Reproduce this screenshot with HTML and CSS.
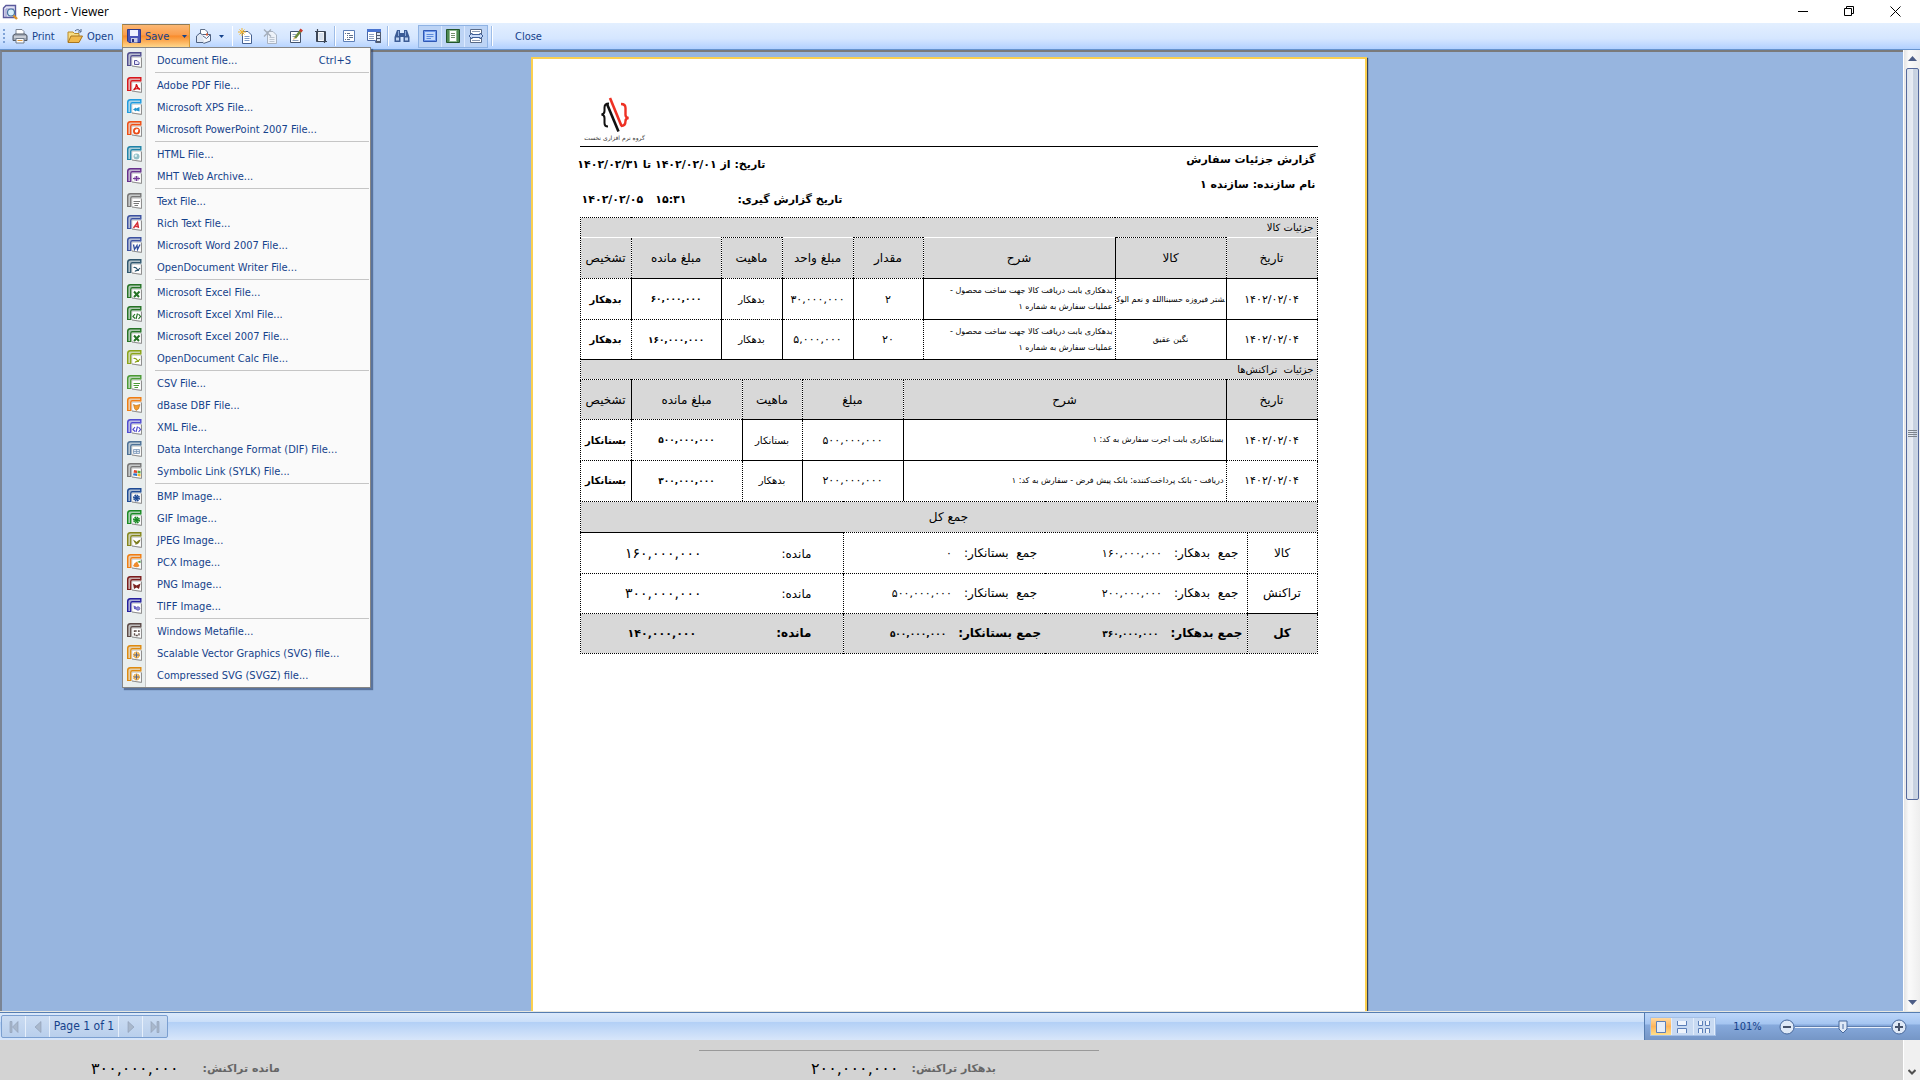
FILE: index.html
```html
<!DOCTYPE html>
<html lang="en">
<head>
  <meta charset="UTF-8" />
  <meta name="viewport" content="width=device-width, initial-scale=1" />
  <title>Report - Viewer</title>
  <link rel="stylesheet" href="styles.css">
</head>
<body>

  <!-- Shared icon shapes -->
  <svg class="defs" aria-hidden="true">
    <symbol id="file" viewBox="0 0 16 16">
      <path d="M0 14V3Q0 0 3 0H14V5H6Q5 5 5 6V14Z" fill="currentColor" opacity=".3"/>
      <path d="M.7 13.500V3.500Q.7 .7 3.500 .7H13.800V4.500" fill="none" stroke="currentColor" stroke-width="1.400"/>
      <path d="M3.700 14V5.500Q3.700 3.700 5.500 3.700H13" fill="none" stroke="currentColor" stroke-width="1.200"/>
      <path d="M0 13.500H4" stroke="currentColor"/>
      <path d="M5 5.500H14L14.500 15.500L5 14Z" fill="#fff" stroke="#c4c4c4" stroke-width=".6"/>
      <path d="M14.500 5.500V15.400L5 14" fill="none" stroke="#8f8f8f"/>
    </symbol>
    <symbol id="lines" viewBox="0 0 16 16">
      <path d="M6.500 8.500H13M6.500 10.500H12M7.500 12.500H11" stroke="currentColor" fill="none"/>
    </symbol>
    <symbol id="cross" viewBox="0 0 16 16">
      <path d="M7 7.500L12 13M12.500 7.500L7 13" stroke="currentColor" stroke-width="2" fill="none"/>
    </symbol>
    <symbol id="code" viewBox="0 0 16 16">
      <path d="M8 8L6 10.500L8 12.500M11.500 8L13.500 10.500L11.500 13M10.500 7.500L9 13" stroke="currentColor" stroke-width="1.200" fill="none"/>
    </symbol>
    <symbol id="wave" viewBox="0 0 16 16">
      <path d="M6.500 8.500Q9 8 10 10T13 9M8 12.500Q9 11 12 11.500" stroke="currentColor" stroke-width="1.200" fill="none"/>
    </symbol>
    <symbol id="flower" viewBox="0 0 16 16">
      <circle cx="9.500" cy="10" r="2.600" fill="none" stroke="currentColor" stroke-width="1.800" stroke-dasharray="1.500 .5"/>
      <circle cx="9.500" cy="10" r="2" fill="currentColor"/>
    </symbol>
    <symbol id="wheel" viewBox="0 0 16 16">
      <circle cx="9.500" cy="10" r="3" fill="#f6c66d" stroke="#d98a16" stroke-dasharray="1.500 .7"/>
      <path d="M9.500 7.500V12.500M7 10H12" stroke="#56618a"/>
    </symbol>
  </svg>

  <div class="title-bar">
    <svg class="app-icon" viewBox="0 0 16 16" width="16" height="16" aria-hidden="true">
      <path d="M1.500 13.500V4L4 1.500H13.500V13.500Z" fill="#e4e4f6" stroke="#5b5a9c" stroke-width="1.400"/>
      <path d="M4 13V5H12" fill="none" stroke="#8e8dc2"/>
      <circle cx="9" cy="8.500" r="3.500" fill="#d9f0fb" stroke="#47749f" stroke-width="1.200"/>
      <path d="M11.500 11.500L15 15" stroke="#dd9428" stroke-width="2.400"/>
    </svg>
    <span class="title">Report - Viewer</span>
    <div class="window-buttons">
      <button type="button" aria-label="Minimize"><svg viewBox="0 0 11 11" width="11" height="11"><path d="M0 5.500H10" stroke="#000"/></svg></button>
      <button type="button" aria-label="Restore"><svg viewBox="0 0 11 11" width="11" height="11"><path d="M.5 2.500H7.500V9.500H.5ZM2.500 2.500V.5H9.500V7.500H7.500" fill="none" stroke="#000"/></svg></button>
      <button type="button" aria-label="Close window"><svg viewBox="0 0 11 11" width="11" height="11"><path d="M.5 .5L10.500 10.500M10.500 .5L.5 10.500" stroke="#000"/></svg></button>
    </div>
  </div>

  <div class="toolbar">
    <div class="grip"><i></i><i></i><i></i><i></i></div>
    <button type="button" class="tool print">
      <svg viewBox="0 0 16 16" width="16" height="16" aria-hidden="true">
        <path d="M4 7V1.500H10L12 3.500V7" fill="#fff" stroke="#7c8797"/>
        <path d="M1 7.500L3 6H13L15 7.500V12.500H1Z" fill="#a3aab6" stroke="#4f5763"/>
        <path d="M2 9H14" stroke="#eef1f5"/>
        <path d="M4 10.500H12V15H4Z" fill="#fff" stroke="#6f7b8b"/>
        <path d="M5.500 12.500H10.500" stroke="#e39a3b"/>
      </svg>
      Print
    </button>
    <button type="button" class="tool open">
      <svg viewBox="0 0 16 16" width="16" height="16" aria-hidden="true">
        <path d="M1 14V4H6L7.500 5.500H12V8" fill="#f8dd83" stroke="#b98a2b"/>
        <path d="M1 14.500L4 8H15.500L12 14.500Z" fill="#f0b94c" stroke="#a87620"/>
        <path d="M8 3Q11 0 13.500 3.500M14 1V4H11" fill="none" stroke="#4d6287"/>
      </svg>
      Open
    </button>

    <div class="save-wrap">
      <button type="button" class="tool save" aria-haspopup="menu" aria-expanded="true">
        <svg viewBox="0 0 14 14" width="14" height="14" aria-hidden="true">
          <path d="M.5 .5H13.500V13.500H2L.5 12Z" fill="#4a55b8" stroke="#2f3785"/>
          <path d="M3 1H11V7H3Z" fill="#eef2ff"/>
          <path d="M4 9H10.500V13.500H4Z" fill="#c9cee6"/>
          <path d="M5 10H7V13H5Z" fill="#29307c"/>
        </svg>
        Save
        <svg class="arrow" viewBox="0 0 5 3" width="5" height="3" aria-hidden="true"><path d="M0 0H5L2.500 3Z" fill="#15428b"/></svg>
      </button>

      <ul class="menu" role="menu">
        <li><button type="button" role="menuitem"><svg class="c-violet" viewBox="0 0 16 16"><use href="#file"/><path d="M7.500 12.500V8.500H10L12 10.500V12.500Z" fill="#e8e7fa" stroke="#56529c"/></svg><span>Document File...</span><kbd>Ctrl+S</kbd></button></li>
        <li class="divider"></li>
        <li><button type="button" role="menuitem"><svg class="c-red" viewBox="0 0 16 16"><use href="#file"/><path d="M6.500 13Q9.500 11 9.500 7Q10 11 13 12.500Q10 10.500 6.500 13" fill="none" stroke="#d31519" stroke-width="1.400"/></svg><span>Adobe PDF File...</span></button></li>
        <li><button type="button" role="menuitem"><svg class="c-sky" viewBox="0 0 16 16"><use href="#file"/><path d="M6 10.500L9 8.500V9.500L12.500 8V12.500L9 11.500V12.500Z" fill="#2696cf"/></svg><span>Microsoft XPS File...</span></button></li>
        <li><button type="button" role="menuitem"><svg class="c-orange" viewBox="0 0 16 16"><use href="#file"/><circle cx="9.500" cy="10" r="2.600" fill="none" stroke="#ea4c17" stroke-width="1.800"/><path d="M9.500 10V7.500L12 9Z" fill="#fff"/></svg><span>Microsoft PowerPoint 2007 File...</span></button></li>
        <li class="divider"></li>
        <li><button type="button" role="menuitem"><svg class="c-teal" viewBox="0 0 16 16"><use href="#file"/><circle cx="9.500" cy="10.500" r="3" fill="#94c0c8"/><circle cx="8.800" cy="9.800" r="1.200" fill="#e3f2f4"/></svg><span>HTML File...</span></button></li>
        <li><button type="button" role="menuitem"><svg class="c-purple" viewBox="0 0 16 16"><use href="#file"/><ellipse cx="9.500" cy="10.500" rx="3" ry="2.500" fill="#b79fca"/><path d="M6 10.500H13M9.500 8V13" stroke="#73389a"/></svg><span>MHT Web Archive...</span></button></li>
        <li class="divider"></li>
        <li><button type="button" role="menuitem"><svg class="c-gray" viewBox="0 0 16 16"><use href="#file"/><use href="#lines"/></svg><span>Text File...</span></button></li>
        <li><button type="button" role="menuitem"><svg class="c-blue" viewBox="0 0 16 16"><use href="#file"/><path d="M6.500 13L10.500 7.500L11.500 13M8.500 11.500H11.500" fill="none" stroke="#d42f38" stroke-width="1.500"/></svg><span>Rich Text File...</span></button></li>
        <li><button type="button" role="menuitem"><svg class="c-blue" viewBox="0 0 16 16"><use href="#file"/><path d="M6.500 7.500L7.500 12.500L10 8.500L10.500 12.500L13 7.500" fill="none" stroke="#2f4d9d" stroke-width="1.300"/></svg><span>Microsoft Word 2007 File...</span></button></li>
        <li><button type="button" role="menuitem"><svg class="c-slate" viewBox="0 0 16 16"><use href="#file"/><use href="#wave"/></svg><span>OpenDocument Writer File...</span></button></li>
        <li class="divider"></li>
        <li><button type="button" role="menuitem"><svg class="c-green" viewBox="0 0 16 16"><use href="#file"/><use href="#cross"/></svg><span>Microsoft Excel File...</span></button></li>
        <li><button type="button" role="menuitem"><svg class="c-green" viewBox="0 0 16 16"><use href="#file"/><use href="#code"/></svg><span>Microsoft Excel Xml File...</span></button></li>
        <li><button type="button" role="menuitem"><svg class="c-green" viewBox="0 0 16 16"><use href="#file"/><use href="#cross"/></svg><span>Microsoft Excel 2007 File...</span></button></li>
        <li><button type="button" role="menuitem"><svg class="c-lime" viewBox="0 0 16 16"><use href="#file"/><use href="#wave"/></svg><span>OpenDocument Calc File...</span></button></li>
        <li class="divider"></li>
        <li><button type="button" role="menuitem"><svg class="c-leaf" viewBox="0 0 16 16"><use href="#file"/><use href="#lines"/></svg><span>CSV File...</span></button></li>
        <li><button type="button" role="menuitem"><svg class="c-amber" viewBox="0 0 16 16"><use href="#file"/><path d="M6.500 7.500L9 8.500L13 7.500L11.500 12L9 13.500L7.500 11.500Z" fill="#f39a2c" stroke="#b9690f" stroke-width=".6"/></svg><span>dBase DBF File...</span></button></li>
        <li><button type="button" role="menuitem"><svg class="c-indigo" viewBox="0 0 16 16"><use href="#file"/><use href="#code"/></svg><span>XML File...</span></button></li>
        <li><button type="button" role="menuitem"><svg class="c-steel" viewBox="0 0 16 16"><use href="#file"/><path d="M6.500 8.500H12.500V12.500H6.500ZM6.500 10.500H12.500M9.500 8.500V12.500" fill="#dfe8f2" stroke="#7c98b8" stroke-width=".8"/></svg><span>Data Interchange Format (DIF) File...</span></button></li>
        <li><button type="button" role="menuitem"><svg class="c-gray" viewBox="0 0 16 16"><use href="#file"/><path d="M7 7L10 7.500V10L6.500 9.800Z" fill="#e0482e"/><path d="M10.500 7.500L13.500 8V10.500L10.500 10.200Z" fill="#55a838"/><path d="M6.500 10.200L10 10.500V13L6 12.200Z" fill="#2c70c9"/><path d="M10.500 10.700L13.500 11V13.500L10.500 13Z" fill="#f1b92a"/></svg><span>Symbolic Link (SYLK) File...</span></button></li>
        <li class="divider"></li>
        <li><button type="button" role="menuitem"><svg class="c-navy" viewBox="0 0 16 16"><use href="#file"/><use href="#flower"/></svg><span>BMP Image...</span></button></li>
        <li><button type="button" role="menuitem"><svg class="c-grass" viewBox="0 0 16 16"><use href="#file"/><use href="#flower"/></svg><span>GIF Image...</span></button></li>
        <li><button type="button" role="menuitem"><svg class="c-olive" viewBox="0 0 16 16"><use href="#file"/><path d="M6 7.500Q9 9 9.500 10Q11 8 13.500 7.500Q12 13 8 12.500L8.500 11.500Q7 10.500 6 7.500" fill="#7c7d1f"/></svg><span>JPEG Image...</span></button></li>
        <li><button type="button" role="menuitem"><svg class="c-amber" viewBox="0 0 16 16"><use href="#file"/><path d="M6 12Q7 8.500 10 7.500L12.500 12Q9.500 14.500 6 12" fill="#ef8c2c"/><path d="M10 8L13.500 6.500V9Z" fill="#3f9a3b"/></svg><span>PCX Image...</span></button></li>
        <li><button type="button" role="menuitem"><svg class="c-maroon" viewBox="0 0 16 16"><use href="#file"/><path d="M6 7.500L9.500 9.500L13.500 7.500L12 13L9.500 11.500L7 13Z" fill="#7c2320"/></svg><span>PNG Image...</span></button></li>
        <li><button type="button" role="menuitem"><svg class="c-royal" viewBox="0 0 16 16"><use href="#file"/><path d="M6.500 7.500L9 8.500V11.500L7 11Z" fill="#6a63c4"/><circle cx="11" cy="10.500" r="1.800" fill="#8f8ad6" stroke="#5650b0" stroke-width=".7"/></svg><span>TIFF Image...</span></button></li>
        <li class="divider"></li>
        <li><button type="button" role="menuitem"><svg class="c-brown" viewBox="0 0 16 16"><use href="#file"/><path d="M7.500 8H12V12.500H7.500Z" fill="none" stroke="#5c4b48" stroke-width="1.400" stroke-dasharray="2.200 1.200"/></svg><span>Windows Metafile...</span></button></li>
        <li><button type="button" role="menuitem"><svg class="c-gold" viewBox="0 0 16 16"><use href="#file"/><use href="#wheel"/></svg><span>Scalable Vector Graphics (SVG) file...</span></button></li>
        <li><button type="button" role="menuitem"><svg class="c-gold" viewBox="0 0 16 16"><use href="#file"/><use href="#wheel"/></svg><span>Compressed SVG (SVGZ) file...</span></button></li>
      </ul>
    </div>

    <button type="button" class="tool mail" aria-label="Send e-mail">
      <svg viewBox="0 0 16 16" width="16" height="16" aria-hidden="true">
        <path d="M4.500 1.500H9L11.500 4V10H4.500Z" fill="#fff" stroke="#5f6f87"/>
        <path d="M.5 8L4 5L8 8V14.500H.5Z" fill="#dfe7f3" stroke="#4f6180"/>
        <path d="M6.500 6.500H14.500V13L7.500 15.500" fill="#f4f7fc" stroke="#4f6180"/>
        <path d="M7 8L10.500 10.500L14 7" fill="none" stroke="#5f7190"/>
        <path d="M10 5.500H12V7.500H10Z" fill="#db5a32"/>
      </svg>
      <svg class="arrow" viewBox="0 0 5 3" width="5" height="3" aria-hidden="true"><path d="M0 0H5L2.500 3Z" fill="#15428b"/></svg>
    </button>
    <span class="sep first"></span>
    <button type="button" class="icon-btn" aria-label="New page">
      <svg viewBox="0 0 16 16" width="16" height="16" aria-hidden="true">
        <path d="M4.500 3.500H10L13.500 7V15.500H4.500Z" fill="#fff" stroke="#456091"/>
        <path d="M6.500 8.500H11.500M6.500 10.500H11.500M6.500 12.500H11.500" stroke="#7f9cc9"/>
        <path d="M4 0V8M0 4H8M1.500 1.500L6.500 6.500M6.500 1.500L1.500 6.500" stroke="#f1b32d"/>
      </svg>
    </button>
    <button type="button" class="icon-btn" aria-label="Delete page" disabled>
      <svg viewBox="0 0 16 16" width="16" height="16" aria-hidden="true">
        <path d="M4.500 3.500H10L13.500 7V15.500H4.500Z" fill="#edf2f9" stroke="#a9b3c2"/>
        <path d="M6.500 9.500H11.500M6.500 11.500H11.500M6.500 13.500H11.500" stroke="#bcc5d1"/>
        <path d="M1 1.500L8 8.500M8 1.500L1 8.500" stroke="#a4adba" stroke-width="1.400"/>
      </svg>
    </button>
    <button type="button" class="icon-btn" aria-label="Edit page">
      <svg viewBox="0 0 16 16" width="16" height="16" aria-hidden="true">
        <path d="M2.500 3.500H12.500V14.500H2.500Z" fill="#fff" stroke="#44546e"/>
        <path d="M4.500 6.500H8M4.500 8.500H7M4.500 12.500H10.500" stroke="#8fa2bd"/>
        <path d="M7 10L13 2.500" stroke="#6c8a3c" stroke-width="2.600"/>
        <path d="M12.200 3.500L13.800 1.500" stroke="#c93a2c" stroke-width="3"/>
        <path d="M5 12L6 9L8 10.500Z" fill="#e2bc7d"/>
      </svg>
    </button>
    <button type="button" class="icon-btn" aria-label="Page setup">
      <svg viewBox="0 0 16 16" width="16" height="16" aria-hidden="true">
        <path d="M3.500 3.500H12.500V13.500H3.500Z" fill="#fff" stroke="#3d4757"/>
        <path d="M4.500 1V14M11.500 3V15M2 3.500H12M4 13.500H14" stroke="#3d4757" stroke-width="1.200"/>
        <path d="M6 5H10V12H6Z" fill="#d8e2ef"/>
      </svg>
    </button>
    <span class="sep"></span>
    <button type="button" class="icon-btn" aria-label="Bookmarks">
      <svg viewBox="0 0 16 16" width="16" height="16" aria-hidden="true">
        <path d="M2.500 2.500H13.500V13.500H2.500Z" fill="#fff" stroke="#5d7fb8"/>
        <path d="M4 5.500H5M6 5.500H9M6 7.500H7M8 7.500H12M6 9.500H7M8 9.500H12M4 11.500H5M6 11.500H9" stroke="#60718d"/>
      </svg>
    </button>
    <button type="button" class="icon-btn" aria-label="Thumbnails">
      <svg viewBox="0 0 16 16" width="16" height="16" aria-hidden="true">
        <path d="M1.500 1.500H14.500V14.500H9.500V12.500H1.500Z" fill="#fff" stroke="#4a67a4"/>
        <path d="M1 2.500H15" stroke="#4a74d0" stroke-width="3"/>
        <path d="M3 6.500H8M3 8.500H8M3 10.500H8" stroke="#8fa2c0"/>
        <path d="M10 4H15V15H10Z" fill="#505b70"/>
        <path d="M11 5H14V7H11ZM11 8H14V10H11ZM11 11H14V13H11Z" fill="#dfe8f5"/>
      </svg>
    </button>
    <span class="sep"></span>
    <button type="button" class="icon-btn" aria-label="Find">
      <svg viewBox="0 0 16 16" width="16" height="16" aria-hidden="true">
        <path d="M3 2H6V5H10V2H13L15.500 9V14H9.500V9H6.500V14H.5V9Z" fill="#3c5c96"/>
        <path d="M2 9.500H5V12.500H2ZM11 9.500H14V12.500H11Z" fill="#bcd0ee"/>
        <path d="M4.500 3V8M11.500 3V8" stroke="#8eabdb"/>
      </svg>
    </button>
    <div class="btn-group">
      <button type="button" aria-label="Full screen">
        <svg viewBox="0 0 16 16" width="16" height="16" aria-hidden="true">
          <path d="M1.500 2.500H14.500V13.500H1.500Z" fill="#6d97ea" stroke="#2f57b4"/>
          <path d="M3 4H13V12H3Z" fill="#c3d9fc"/>
          <path d="M4.500 6.500H11.500M4.500 8.500H11.500M4.500 10.500H9" stroke="#5d8adb"/>
        </svg>
      </button>
      <button type="button" aria-label="Whole page">
        <svg viewBox="0 0 16 16" width="16" height="16" aria-hidden="true">
          <path d="M1.500 1.500H14.500V14.500H1.500Z" fill="#4f8a52" stroke="#22542b"/>
          <path d="M4.500 2.500H11.500V13.500H4.500Z" fill="#fff" stroke="#8fb88f"/>
          <path d="M6 5.500H10M6 7.500H10M6 9.500H10" stroke="#76906f"/>
        </svg>
      </button>
      <button type="button" aria-label="Page width">
        <svg viewBox="0 0 16 16" width="16" height="16" aria-hidden="true">
          <path d="M2.500 1.500H13.500V14.500H2.500Z" fill="#fff" stroke="#596a86"/>
          <path d="M4 3.500H12M4 12.500H12" stroke="#8b9ab3"/>
          <path d="M1 8L4 5V6.500H12V5L15 8L12 11V9.500H4V11Z" fill="#c8daf8" stroke="#3f5f97"/>
        </svg>
      </button>
    </div>
    <span class="sep"></span>
    <button type="button" class="tool close">Close</button>
  </div>

  <!-- Preview area -->
  <main class="viewer">
    <div class="canvas">
      <article class="paper" lang="fa" dir="rtl">
        <div class="logo">
          <svg viewBox="0 0 30 36" width="30" height="36" aria-hidden="true">
            <path d="M9 6.500Q4.500 6.500 4.500 10.500V14Q4.500 17 1.500 17.500Q4.500 18 4.500 21V26Q4.500 29.500 8 29.500" fill="none" stroke="#111" stroke-width="2"/>
            <path d="M7 7L18.500 34.500" stroke="#111" stroke-width="2.600"/>
            <path d="M10 1L21.500 29" stroke="#ee3124" stroke-width="2.600"/>
            <path d="M21 7Q25.500 7 25.500 11V18Q25.500 20.500 28.500 21Q25.500 21.500 25.500 24Q25.500 29 21 29" fill="none" stroke="#ee3124" stroke-width="2.400"/>
          </svg>
          <span>گروه نرم افزاری نخست</span>
        </div>

        <header class="report-head">
          <div class="head-right">
            <h1>گزارش جزئیات سفارش</h1>
            <p>نام سازنده: سازنده ۱</p>
          </div>
          <div class="head-left">
            <p class="range">تاریخ: از ۱۴۰۲/۰۲/۰۱ تا ۱۴۰۲/۰۲/۳۱</p>
            <p class="taken"><span>تاریخ گزارش گیری:</span><span>۱۵:۳۱</span><span>۱۴۰۲/۰۲/۰۵</span></p>
          </div>
        </header>

        <table class="report goods">
          <colgroup><col class="w91"><col class="w111"><col><col class="w70"><col class="w71"><col class="w61"><col class="w90"><col class="w51"></colgroup>
          <thead>
            <tr class="group"><th colspan="8">جزئیات کالا</th></tr>
            <tr class="cols">
              <th class="no-top">تاریخ</th><th class="sl">کالا</th><th class="no-top">شرح</th><th>مقدار</th>
              <th class="no-top">مبلغ واحد</th><th>ماهیت</th><th class="no-top">مبلغ مانده</th><th class="no-top">تشخیص</th>
            </tr>
          </thead>
          <tbody>
            <tr>
              <td class="st sl sb">۱۴۰۲/۰۲/۰۴</td>
              <td class="st sb name">&zwj;شتر فیروزه حسبناالله و نعم الوک&zwj;</td>
              <td class="st sl sb desc">بدهکاری بابت دریافت کالا جهت ساخت محصول - عملیات سفارش به شماره ۱</td>
              <td class="sl">۲</td><td class="sl">۳۰,۰۰۰,۰۰۰</td><td class="sl word">بدهکار</td>
              <td class="st sl strong">۶۰,۰۰۰,۰۰۰</td><td class="strong word">بدهکار</td>
            </tr>
            <tr class="last">
              <td class="sl">۱۴۰۲/۰۲/۰۴</td>
              <td class="name">نگین عقیق</td>
              <td class="desc">بدهکاری بابت دریافت کالا جهت ساخت محصول - عملیات سفارش به شماره ۱</td>
              <td class="sl">۲۰</td><td class="sl">۵,۰۰۰,۰۰۰</td><td class="sl word">بدهکار</td>
              <td class="strong">۱۶۰,۰۰۰,۰۰۰</td><td class="strong word">بدهکار</td>
            </tr>
          </tbody>
        </table>

        <table class="report deals">
          <colgroup><col class="w91"><col><col class="w101"><col class="w60"><col class="w111"><col class="w51"></colgroup>
          <thead>
            <tr class="group"><th colspan="6">جزئیات &nbsp;تراکنش‌ها</th></tr>
            <tr class="cols">
              <th class="sl sb">تاریخ</th><th class="sb">شرح</th><th>مبلغ</th><th>ماهیت</th><th class="sl">مبلغ مانده</th><th>تشخیص</th>
            </tr>
          </thead>
          <tbody>
            <tr>
              <td class="st sl">۱۴۰۲/۰۲/۰۴</td>
              <td class="st sl sb desc">بستانکاری بابت اجرت سفارش به کد: ۱</td>
              <td class="st sb">۵۰۰,۰۰۰,۰۰۰</td><td class="st sl sb word">بستانکار</td>
              <td class="strong">۵۰۰,۰۰۰,۰۰۰</td><td class="strong word">بستانکار</td>
            </tr>
            <tr class="open-end">
              <td>۱۴۰۲/۰۲/۰۴</td>
              <td class="sl desc">دریافت - بانک پرداخت‌کننده: بانک پیش فرض - سفارش به کد: ۱</td>
              <td class="sl">۲۰۰,۰۰۰,۰۰۰</td><td class="word">بدهکار</td>
              <td class="sl strong">۳۰۰,۰۰۰,۰۰۰</td><td class="strong word">بستانکار</td>
            </tr>
          </tbody>
        </table>

        <table class="report totals">
          <colgroup><col class="w70"><col><col class="w202"><col class="w263"></colgroup>
          <thead>
            <tr class="grand"><th colspan="4">جمع کل</th></tr>
          </thead>
          <tbody>
            <tr>
              <th scope="row">کالا</th>
              <td class="sum"><b>جمع &nbsp;بدهکار:</b><span>۱۶۰,۰۰۰,۰۰۰</span></td>
              <td class="sum inner"><b>جمع &nbsp;بستانکار:</b><span>۰</span></td>
              <td class="rest st"><b>مانده:</b><span>۱۶۰,۰۰۰,۰۰۰</span></td>
            </tr>
            <tr>
              <th scope="row">تراکنش</th>
              <td class="sum"><b>جمع &nbsp;بدهکار:</b><span>۲۰۰,۰۰۰,۰۰۰</span></td>
              <td class="sum inner"><b>جمع &nbsp;بستانکار:</b><span>۵۰۰,۰۰۰,۰۰۰</span></td>
              <td class="rest"><b>مانده:</b><span>۳۰۰,۰۰۰,۰۰۰</span></td>
            </tr>
            <tr class="all">
              <th scope="row" class="st">کل</th>
              <td class="sum"><b>جمع بدهکار:</b><span>۳۶۰,۰۰۰,۰۰۰</span></td>
              <td class="sum inner"><b>جمع بستانکار:</b><span>۵۰۰,۰۰۰,۰۰۰</span></td>
              <td class="rest"><b>مانده:</b><span>۱۴۰,۰۰۰,۰۰۰</span></td>
            </tr>
          </tbody>
        </table>
      </article>
    </div>

    <div class="scrollbar">
      <button type="button" aria-label="Scroll up"><svg viewBox="0 0 9 5" width="9" height="5"><path d="M4.500 0L9 5H0Z" fill="#4b5c86"/></svg></button>
      <div class="track"><div class="thumb"><i></i><i></i><i></i><i></i></div></div>
      <button type="button" aria-label="Scroll down"><svg viewBox="0 0 9 5" width="9" height="5"><path d="M0 0H9L4.500 5Z" fill="#4b5c86"/></svg></button>
    </div>
  </main>

  <div class="status-bar">
    <div class="pager">
      <button type="button" aria-label="First page" disabled><svg viewBox="0 0 10 12" width="10" height="12"><path d="M1 .5H3V11.500H1ZM9 .5V11.500L3.500 6Z" fill="#a9b8cc" stroke="#8d9cb3" stroke-width=".6"/></svg></button>
      <button type="button" aria-label="Previous page" disabled><svg viewBox="0 0 10 12" width="10" height="12"><path d="M8 .5V11.500L2 6Z" fill="#a9b8cc" stroke="#8d9cb3" stroke-width=".6"/></svg></button>
      <span class="page-no">Page 1 of 1</span>
      <button type="button" aria-label="Next page" disabled><svg viewBox="0 0 10 12" width="10" height="12"><path d="M2 .5V11.500L8 6Z" fill="#a9b8cc" stroke="#8d9cb3" stroke-width=".6"/></svg></button>
      <button type="button" aria-label="Last page" disabled><svg viewBox="0 0 10 12" width="10" height="12"><path d="M7 .5H9V11.500H7ZM1 .5V11.500L6.500 6Z" fill="#a9b8cc" stroke="#8d9cb3" stroke-width=".6"/></svg></button>
    </div>
    <div class="zoom-panel">
      <div class="views">
        <button type="button" class="on" aria-label="Single page"><svg viewBox="0 0 12 12" width="12" height="12"><path d="M1.500 .5H10.500V11.500H1.500Z" fill="#e6edf8" stroke="#5b7fb8"/></svg></button>
        <button type="button" aria-label="Continuous"><svg viewBox="0 0 12 12" width="12" height="12"><path d="M1.500 0V4.500H10.500V0M1.500 12V7.500H10.500V12" fill="#eef4fc" stroke="#5b7fb8"/></svg></button>
        <button type="button" aria-label="Multiple pages"><svg viewBox="0 0 12 12" width="12" height="12"><path d="M.5 0V4.500H4.500V0M7.500 0V4.500H11.500V0M.5 12V7.500H4.500V12M7.500 12V7.500H11.500V12" fill="#eef4fc" stroke="#5b7fb8"/></svg></button>
      </div>
      <label class="zoom-value" for="zoom">101%</label>
      <button type="button" class="round" aria-label="Zoom out"><svg viewBox="0 0 16 16" width="16" height="16"><circle cx="8" cy="8" r="7" fill="#dfe9f7" stroke="#47689c"/><path d="M4 8H12" stroke="#47536b" stroke-width="2"/></svg></button>
      <input type="range" id="zoom" min="0" max="200" value="101">
      <button type="button" class="round" aria-label="Zoom in"><svg viewBox="0 0 16 16" width="16" height="16"><circle cx="8" cy="8" r="7" fill="#dfe9f7" stroke="#47689c"/><path d="M4 8H12M8 4V12" stroke="#47536b" stroke-width="2"/></svg></button>
    </div>
  </div>

  <!-- Totals of the form behind the viewer -->
  <footer class="behind">
    <div class="behind-body">
      <p><span class="num">۳۰۰,۰۰۰,۰۰۰</span><span class="cap">مانده تراکنش:</span></p>
      <p class="ruled"><span class="num">۲۰۰,۰۰۰,۰۰۰</span><span class="cap">بدهکار تراکنش:</span></p>
    </div>
    <div class="behind-scroll">
      <svg viewBox="0 0 8 6" width="8" height="6" aria-hidden="true"><path d="M.5 1L4 4.500L7.500 1" fill="none" stroke="#505050" stroke-width="2"/></svg>
    </div>
  </footer>

</body>
</html>
```
FILE: styles.css
```css
* {
  box-sizing: border-box;
}

body {
  margin: 0;
  height: 100vh;
  display: flex;
  flex-direction: column;
  overflow: hidden;
  font-family: "DejaVu Sans Condensed", "Open Sans", sans-serif;
  font-size: 11px;
  color: #15428b;
  background: #fff;
}

button {
  font: inherit;
  color: inherit;
  background: none;
  border: 0;
  padding: 0;
  display: flex;
  align-items: center;
  justify-content: center;
}

p, h1, ul {
  margin: 0;
  padding: 0;
}

.defs {
  display: none;
}

/* Title bar */
.title-bar {
  height: 23px;
  flex: none;
  display: flex;
  align-items: center;
  padding-left: 2px;
  color: #000;
}

.title {
  font-family: "Open Sans", sans-serif;
  font-size: 12px;
  margin-left: 5px;
}

.window-buttons {
  margin-left: auto;
  margin-right: 2px;
  display: flex;
}

.window-buttons button {
  width: 46px;
  height: 20px;
}

/* Toolbar */
.toolbar {
  height: 27px;
  flex: none;
  display: flex;
  align-items: center;
  background: linear-gradient(#e3efff, #d5e6ff 60%, #b1d0ff);
  border-bottom: 1px solid #6593cf;
}

.grip {
  width: 9px;
  padding-left: 3px;
  display: flex;
  flex-direction: column;
  gap: 2px;
}

.grip i {
  width: 2px;
  height: 2px;
  background: #7fa3d8;
}

.tool {
  height: 24px;
  gap: 4px;
}

.print {
  width: 55px;
  padding-left: 3px;
  justify-content: flex-start;
}

.open {
  width: 58px;
  padding-left: 3px;
  justify-content: flex-start;
}

.save-wrap {
  position: relative;
}

.save {
  width: 68px;
  padding: 0 2px 0 4px;
  justify-content: flex-start;
  border: 1px solid #d69a35;
  border-top-color: #8f7a55;
  background: linear-gradient(#fbb875, #fa9d4c 45%, #f98b2b 50%, #ffd68a);
}

.save .arrow {
  margin-left: auto;
}

.mail {
  width: 42px;
  padding-left: 6px;
  gap: 7px;
  justify-content: flex-start;
}

.sep {
  width: 2px;
  height: 20px;
  margin-left: 1px;
  background: linear-gradient(to right, #9ebde8 50%, #fff 50%);
}

.sep.first {
  width: 1px;
  margin-left: 0;
}

.icon-btn {
  width: 25px;
  height: 24px;
}

.btn-group {
  display: flex;
  margin: 0 2px 0 4px;
  width: 70px;
  height: 23px;
  border: 1px solid #8fb3e4;
  background: #bdd4f5;
}

.btn-group button {
  flex: 1;
}

.btn-group button + button {
  border-left: 1px solid #dceaff;
}

.close {
  margin-left: 22px;
}

/* Save menu */
.menu {
  position: absolute;
  z-index: 5;
  top: 23px;
  left: 0;
  width: 249px;
  padding: 1px;
  list-style: none;
  border: 1px solid #868686;
  background: linear-gradient(to right, #e9eeee 22px, #c5c5c5 22px, #c5c5c5 23px, #fafafa 23px);
  box-shadow: 2px 2px 1px rgba(40, 60, 100, 0.55);
}

.menu button {
  width: 100%;
  height: 22px;
  padding: 0 18px 0 3px;
  justify-content: flex-start;
}

.menu svg {
  width: 16px;
  height: 16px;
  margin-right: 14px;
}

.menu kbd {
  font: inherit;
  margin-left: auto;
}

.menu .divider {
  height: 3px;
  margin-left: 31px;
  border-top: 1px solid #fafafa;
  border-bottom: 1px solid #fafafa;
  background: #c5c5c5;
}

.c-violet { color: #514e8e; }
.c-red { color: #d8171b; }
.c-sky { color: #1f9ade; }
.c-orange { color: #ee4e14; }
.c-teal { color: #1f83a8; }
.c-purple { color: #66308c; }
.c-gray { color: #777; }
.c-blue { color: #3c52a0; }
.c-slate { color: #2f566e; }
.c-green { color: #267326; }
.c-lime { color: #8aa318; }
.c-leaf { color: #4b9a35; }
.c-amber { color: #f07d12; }
.c-indigo { color: #504bd0; }
.c-steel { color: #4c7096; }
.c-navy { color: #1e4a94; }
.c-grass { color: #188a22; }
.c-olive { color: #85861c; }
.c-maroon { color: #7b1d1c; }
.c-royal { color: #241f9e; }
.c-brown { color: #5c4b48; }
.c-gold { color: #de8a10; }

/* Preview area */
.viewer {
  flex: 1;
  min-height: 0;
  display: flex;
  border-bottom: 1px solid #e8e8e0;
}

.canvas {
  flex: 1;
  overflow: hidden;
  padding: 5px 8px 0 0;
  background: #97b5df;
  border-top: 2px solid #7a7a7a;
  border-left: 2px solid #7a8494;
}

.paper {
  width: 100%;
  max-width: 836px;
  height: 100%;
  margin: 0 auto;
  padding: 38px 47px 0;
  background: #fff;
  border: 2px solid #fbd050;
  border-bottom: 0;
  box-shadow: 1px 1px 1px #33425c;
  color: #000;
  font-family: "DejaVu Sans", sans-serif;
}

.logo {
  height: 50px;
  border-bottom: 1px solid #000;
  display: flex;
  flex-direction: column;
  align-items: center;
  width: 100%;
  padding-right: 668px;
}

.logo span {
  font-size: 6px;
  line-height: 10px;
  color: #333;
  white-space: nowrap;
}

.report-head {
  height: 70px;
  padding: 0 2px;
  display: flex;
  justify-content: space-between;
  font-size: 11px;
  font-weight: bold;
}

.report-head h1 {
  font-size: 11px;
  line-height: 26px;
}

.head-right p {
  line-height: 24px;
}

.head-left {
  width: 261px;
}

.range {
  line-height: 36px;
  padding-right: 77px;
  white-space: nowrap;
}

.taken {
  line-height: 34px;
  display: flex;
  gap: 12px;
}

.taken span:first-child {
  margin-left: auto;
}

/* Report tables */
.report {
  width: 100%;
  table-layout: fixed;
  border-collapse: collapse;
  font-size: 11px;
}

.deals {
  margin-top: -1px;
}

.report th,
.report td {
  height: 40px;
  padding: 0;
  border: 1px dotted #000;
  text-align: center;
  font-weight: normal;
  white-space: nowrap;
  overflow: hidden;
}

.report tbody tr:first-child td {
  height: 41px;
}

.report thead tr,
.report thead th {
  background: #d8d8d8;
}

.report .group th {
  height: 20px;
  padding: 0 3px;
  text-align: right;
  font-size: 10px;
}

.goods .group th {
  border-bottom: 0;
}

.report .cols th {
  font-size: 12px;
}

.goods .cols th {
  height: 41px;
}

.report .cols .no-top {
  border-top: 0;
}

.report .desc {
  padding: 0 2px;
  text-align: right;
  white-space: normal;
  font-size: 8px;
  line-height: 16px;
}

.report .name {
  font-size: 8px;
}

.report .strong {
  font-size: 9px;
  font-weight: bold;
}

.report .word {
  font-size: 10px;
}

.report .st { border-top-style: solid; }
.report .sb { border-bottom-style: solid; }
.report .sl { border-left-style: solid; }
.report .last td { border-bottom-style: solid; }
.report .open-end td { border-bottom: 0; }

.w51 { width: 51px; }
.w60 { width: 60px; }
.w61 { width: 61px; }
.w70 { width: 70px; }
.w71 { width: 71px; }
.w90 { width: 90px; }
.w91 { width: 91px; }
.w101 { width: 101px; }
.w111 { width: 111px; }
.w202 { width: 202px; }
.w263 { width: 263px; }

.totals .grand th {
  height: 31px;
  font-size: 12px;
}

.totals tbody th {
  font-size: 12px;
}

.totals td b {
  font-size: 12px;
  font-weight: normal;
}

.totals .sum {
  padding-right: 4px;
  text-align: right;
  border-left: 0;
}

.totals tr:not(.all) .sum {
  padding-right: 8px;
}

.totals .sum span {
  margin-right: 12px;
}

.totals .inner {
  border-right: 0;
  border-left: 1px dotted #000;
}

.totals .rest {
  padding-right: 31px;
  text-align: right;
}

.totals .rest span {
  margin-right: 80px;
  font-size: 14px;
}

.totals .all th,
.totals .all td {
  background: #d8d8d8;
}

.totals .all th,
.totals .all td b,
.totals .all td span {
  font-weight: bold;
}

.totals .all .sum span {
  font-size: 9px;
}

.totals .all .rest span {
  font-size: 11px;
}

/* Scrollbar */
.scrollbar {
  width: 17px;
  flex: none;
  display: flex;
  flex-direction: column;
  background: linear-gradient(to right, #e4e4e4, #fafafa 30%, #eee);
  border-left: 1px solid #fff;
}

.scrollbar button {
  height: 17px;
}

.track {
  flex: 1;
  padding: 1px 1px 0 2px;
}

.thumb {
  height: 79%;
  display: flex;
  flex-direction: column;
  align-items: center;
  justify-content: center;
  gap: 1px;
  border: 1px solid #55699c;
  border-radius: 2px;
  background: linear-gradient(to right, #dde4ee, #e8ecf3 50%, #c6d0df 60%, #cdd7e5);
}

.thumb i {
  width: 9px;
  height: 1px;
  background: #7d848d;
}

/* Status bar */
.status-bar {
  height: 28px;
  flex: none;
  display: flex;
  justify-content: space-between;
  border-top: 1px solid #567db0;
  background: linear-gradient(#dbe9fb, #cbdff9 32%, #b3d0f6 35%, #d8e6fa);
}

.pager {
  display: flex;
  margin: 2px 0 2px 1px;
  width: 167px;
  border: 1px solid #7b9fd0;
  border-radius: 2px;
  background: linear-gradient(#cbdcf2, #b9cfec);
}

.pager button {
  width: 24px;
  border-right: 1px solid #e6effb;
}

.pager button:last-child {
  border-right: 0;
}

.page-no {
  flex: 1;
  text-align: center;
  font-size: 12px;
  line-height: 21px;
  border-right: 1px solid #e6effb;
}

.zoom-panel {
  width: 276px;
  display: flex;
  align-items: center;
  padding: 0 13px 0 5px;
  border-left: 1px solid #567db0;
  background: linear-gradient(#bcd6f9, #a5c5f1 40%, #86a9dc 45%, #7596c6);
}

.views {
  display: flex;
  width: 66px;
  height: 19px;
  border: 1px solid #a5c0e6;
  background: #c8daf2;
}

.views button {
  flex: 1;
  border-right: 1px solid #e2edfb;
}

.views .on {
  background: linear-gradient(#ffd9a0, #ffb55a 50%, #ffe08c);
}

.zoom-value {
  flex: 1;
  text-align: center;
}

.round {
  width: 16px;
  height: 16px;
}

#zoom {
  width: 96px;
  height: 16px;
  margin: 0;
  appearance: none;
  background: linear-gradient(transparent 7px, #5f7fb0 7px, #5f7fb0 8px, #e8effa 8px, #e8effa 9px, transparent 9px);
}

#zoom::-webkit-slider-thumb {
  appearance: none;
  width: 10px;
  height: 14px;
  background: url("data:image/svg+xml,%3Csvg xmlns='http://www.w3.org/2000/svg' viewBox='0 0 10 14'%3E%3Cpath d='M1 1H9V9L5 13L1 9Z' fill='%23dfe9f7' stroke='%2347689c'/%3E%3Cpath d='M5 4V9' stroke='%2347689c'/%3E%3C/svg%3E") no-repeat;
}

/* Form behind the viewer */
.behind {
  height: 40px;
  flex: none;
  display: flex;
  background: #d3d3d3;
  font-family: "DejaVu Sans", sans-serif;
}

.behind-body {
  flex: 1;
  display: grid;
  grid-template-columns: 608px 400px;
  column-gap: 91px;
  align-items: end;
  padding-top: 10px;
}

.behind p {
  display: flex;
  align-items: center;
  gap: 24px;
  height: 30px;
  padding: 6px 0 0 91px;
}

.behind .ruled {
  gap: 13px;
  padding: 6px 0 0 112px;
  border-top: 1px solid #999;
}

.num {
  font-size: 16px;
  color: #000;
}

.cap {
  font-size: 11px;
  font-weight: bold;
  color: #666;
  direction: rtl;
}

.behind-scroll {
  width: 17px;
  display: flex;
  align-items: flex-end;
  justify-content: center;
  padding-bottom: 5px;
  background: #f0f0f0;
  border-left: 1px solid #fff;
}
```
